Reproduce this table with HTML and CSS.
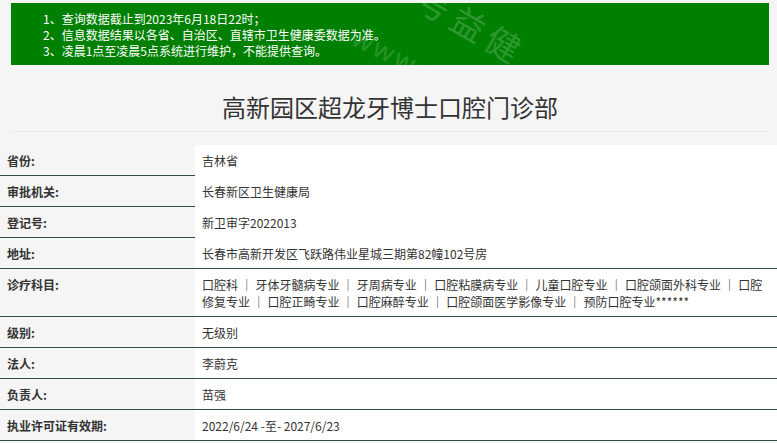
FILE: index.html
```html
<!DOCTYPE html>
<html lang="zh-CN">
<head>
<meta charset="utf-8">
<title>高新园区超龙牙博士口腔门诊部</title>
<link rel="stylesheet" href="styles.css">
</head>
<body>
<div class="page">
  <div class="notice">
    <p>1、查询数据截止到2023年6月18日22时；</p>
    <p>2、信息数据结果以各省、自治区、直辖市卫生健康委数据为准。</p>
    <p>3、凌晨1点至凌晨5点系统进行维护，不能提供查询。</p>
  </div>
  <h1 class="title">高新园区超龙牙博士口腔门诊部</h1>
  <div class="info">
    <div class="row"><div class="label">省份:</div><div class="value">吉林省</div></div>
    <div class="row"><div class="label">审批机关:</div><div class="value">长春新区卫生健康局</div></div>
    <div class="row"><div class="label">登记号:</div><div class="value">新卫审字2022013</div></div>
    <div class="row lined"><div class="label">地址:</div><div class="value">长春市高新开发区飞跃路伟业星城三期第82幢102号房</div></div>
    <div class="row lined"><div class="label">诊疗科目:</div><div class="value">口腔科 ｜ 牙体牙髓病专业 ｜ 牙周病专业 ｜ 口腔粘膜病专业 ｜ 儿童口腔专业 ｜ 口腔颌面外科专业 ｜ 口腔修复专业 ｜ 口腔正畸专业 ｜ 口腔麻醉专业 ｜ 口腔颌面医学影像专业 ｜ 预防口腔专业******</div></div>
    <div class="row lined"><div class="label">级别:</div><div class="value">无级别</div></div>
    <div class="row lined"><div class="label">法人:</div><div class="value">李蔚克</div></div>
    <div class="row lined"><div class="label">负责人:</div><div class="value">苗强</div></div>
    <div class="row lined"><div class="label">执业许可证有效期:</div><div class="value">2022/6/24 -至- 2027/6/23</div></div>
  </div>
  <div class="watermark">
    <span class="wm-cn">号益健</span>
    <span class="wm-en">www.tzl</span>
  </div>
</div>
</body>
</html>
```
FILE: styles.css
```css
html, body {
  margin: 0;
  padding: 0;
  background: #f5f5f5;
}
body {
  font-family: "Noto Sans CJK SC", "Noto Sans", sans-serif;
  color: #333;
  font-size: 12px;
  overflow: hidden;
}
.page {
  position: relative;
  width: 777px;
}
.notice {
  margin: 3px 8px 0 11px;
  height: 62px;
  box-sizing: border-box;
  padding: 8px 0 0 32px;
  background: #008000;
  color: #fff;
  font-size: 12px;
  line-height: 16px;
}
.notice p {
  margin: 0;
}
.title {
  margin: 0 8px 0 11px;
  padding: 25px 0 7px;
  font-size: 24px;
  line-height: 34px;
  font-weight: normal;
  text-align: center;
  color: #333;
  border-bottom: 1px solid #e8e8e8;
}
.info {
  margin-top: 13px;
  width: 777px;
}
.row {
  display: grid;
  grid-template-columns: 195px 1fr;
}
.label, .value {
  padding: 7px 7px 6px;
  line-height: 17px;
  font-size: 12px;
}
.label {
  font-weight: 700;
  color: #333;
  border-bottom: 1px solid #2f4f45;
}
.value {
  background: #fff;
  padding-right: 9px;
  color: #333;
}
.row.lined .value {
  border-bottom: 1px solid #2f4f45;
}
.watermark {
  position: absolute;
  left: 0;
  top: 0;
  width: 777px;
  height: 80px;
  overflow: hidden;
  pointer-events: none;
}
.wm-cn {
  position: absolute;
  left: 432px;
  top: -30px;
  font-size: 34px;
  letter-spacing: 6px;
  color: rgba(255, 255, 255, 0.2);
  transform: rotate(30deg);
  transform-origin: left top;
}
.wm-en {
  position: absolute;
  left: 362px;
  top: 16px;
  font-family: "Noto Sans", sans-serif;
  font-size: 26px;
  letter-spacing: 3px;
  color: rgba(255, 255, 255, 0.18);
  transform: rotate(26deg);
  transform-origin: left top;
}
```
